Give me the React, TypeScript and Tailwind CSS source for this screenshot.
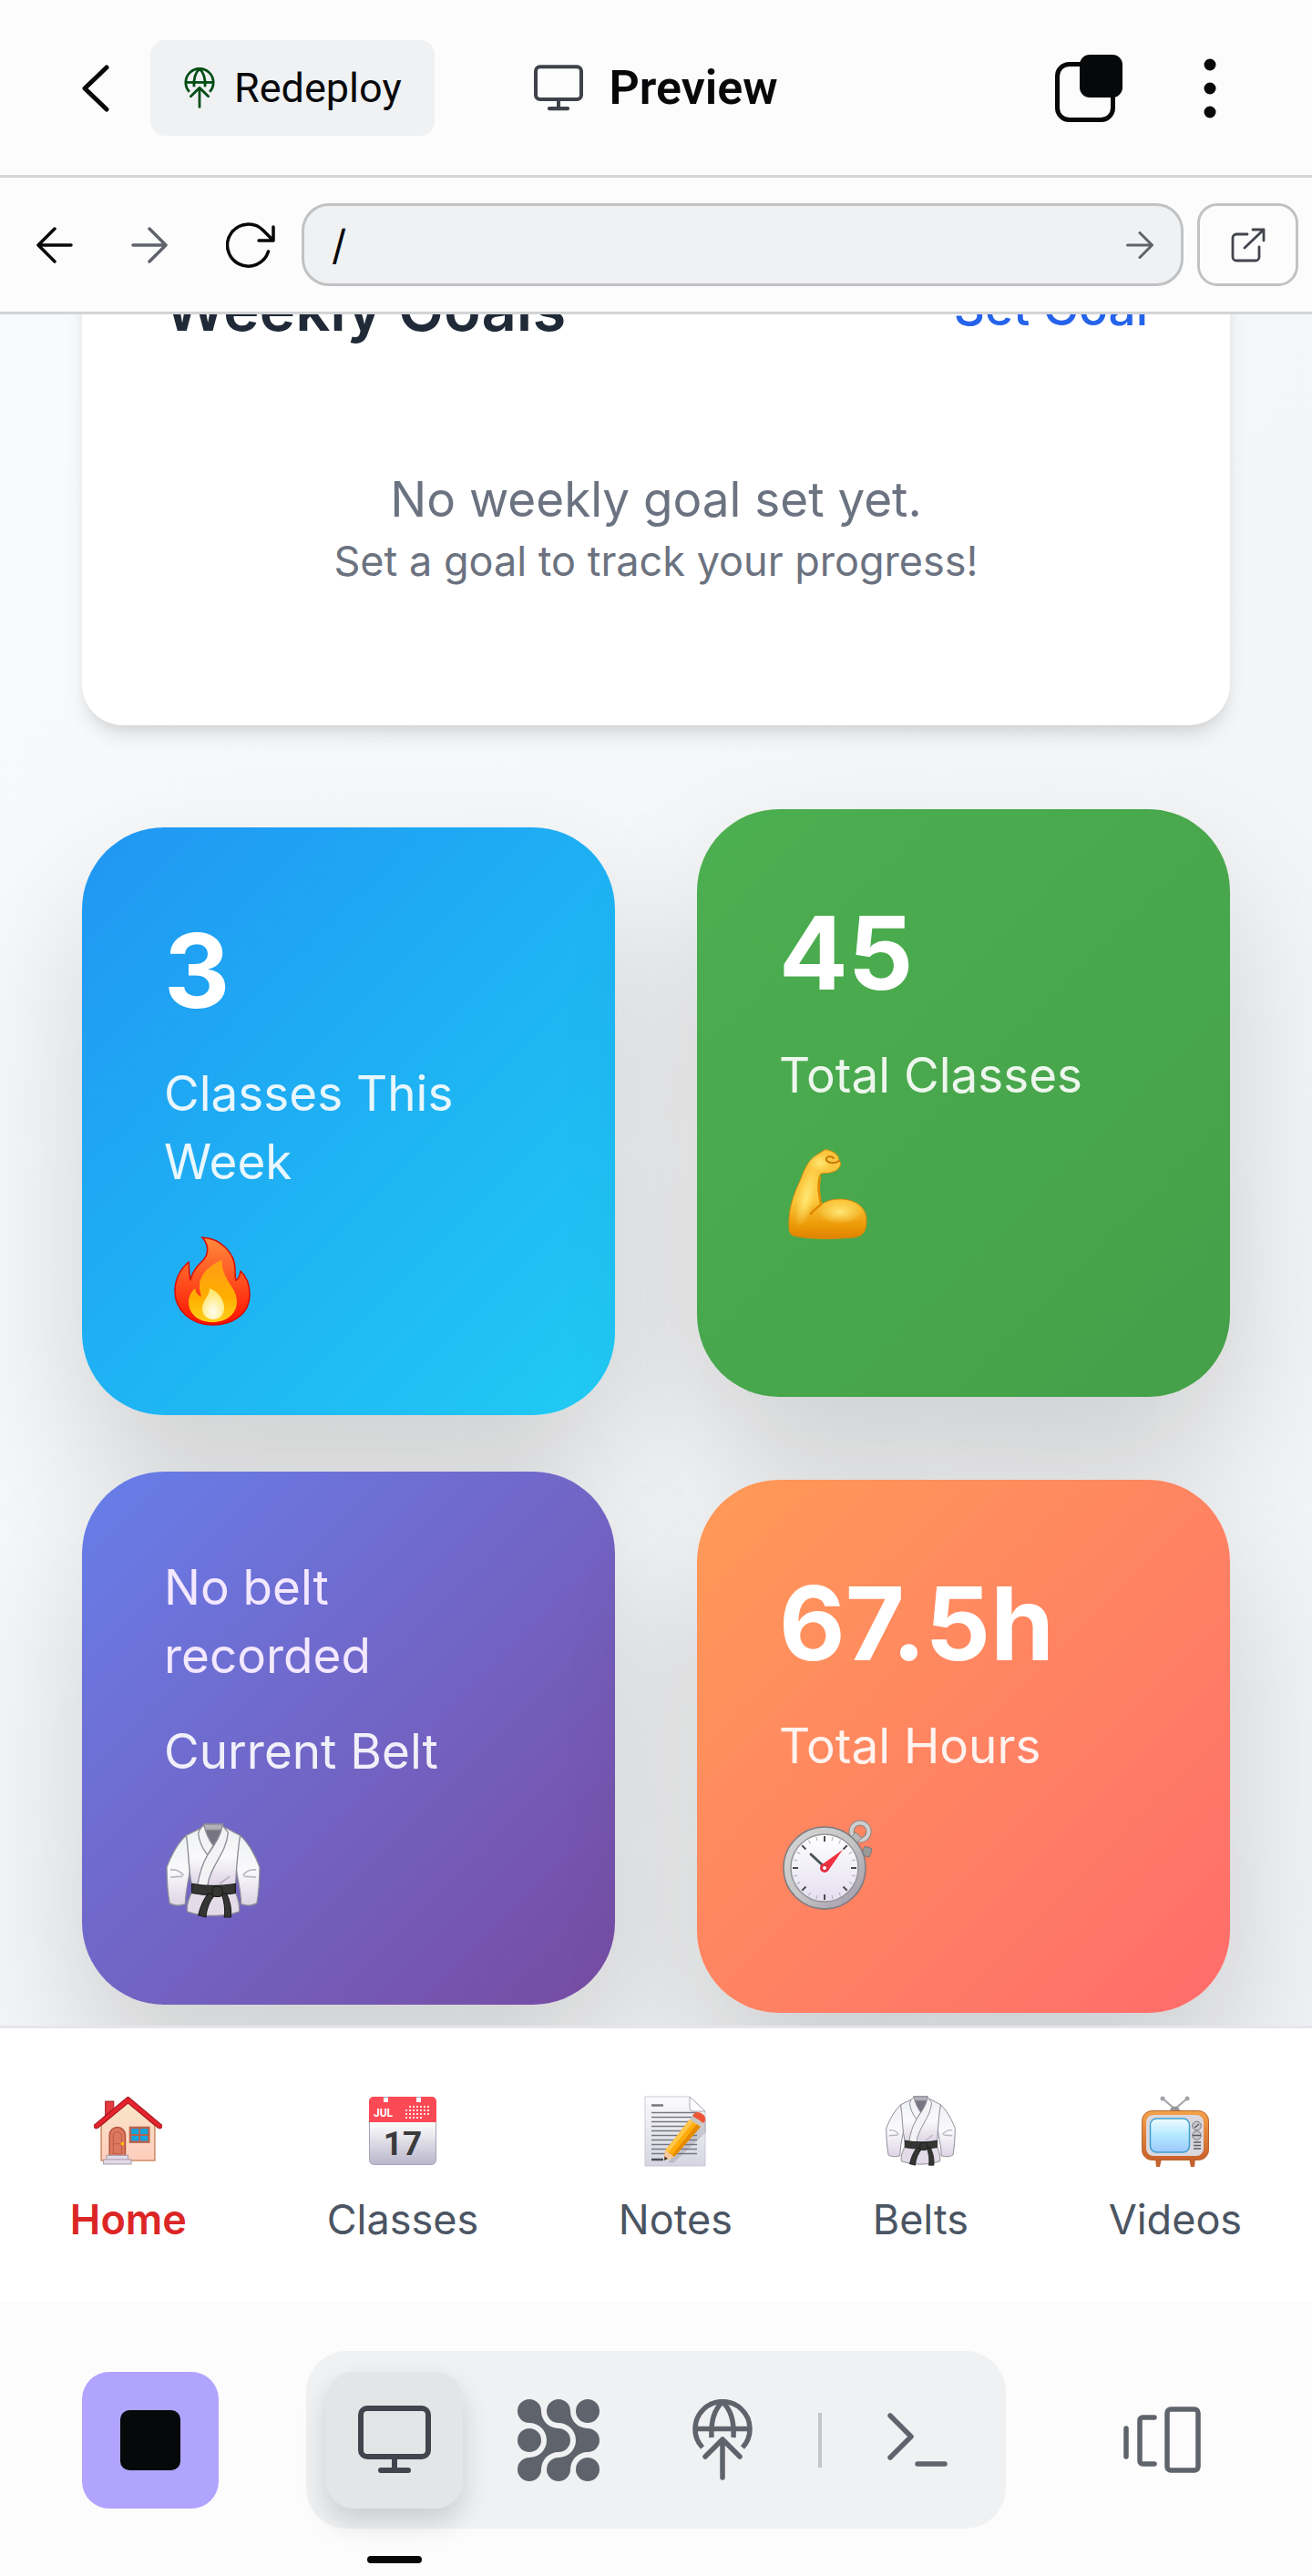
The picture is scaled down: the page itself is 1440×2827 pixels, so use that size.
import React from "react";

type IconProps = { className?: string };

/* ---------- Line icons ---------- */

function MonitorIcon({ className }: IconProps) {
  return (
    <svg viewBox="0 0 80 75" fill="none" stroke="currentColor" strokeWidth="6" strokeLinecap="round" className={className} aria-hidden="true">
      <rect x="3" y="3" width="74" height="53" rx="7" />
      <path d="M40 56v15" />
      <path d="M25 71h30" />
    </svg>
  );
}

function DeployIcon({ className }: IconProps) {
  return (
    <svg viewBox="0 0 66 89" fill="none" stroke="currentColor" strokeWidth="5.5" className={className} aria-hidden="true">
      <path d="M11 53A30 30 0 1 1 55 53" />
      <path d="M3 32.500h60" />
      <path d="M33 3C24 11 20 24 21 42M33 3c9 8 13 21 12 39" />
      <path d="M33 46v40M14 63l19-19 19 19" strokeLinecap="round" strokeLinejoin="round" />
    </svg>
  );
}

function BackIcon({ className }: IconProps) {
  return (
    <svg viewBox="0 0 30 52" fill="none" stroke="currentColor" strokeWidth="5" strokeLinecap="round" strokeLinejoin="round" className={className} aria-hidden="true">
      <path d="M27 3 3 26l24 23" />
    </svg>
  );
}

function ArrowIcon({ className, stroke = 3.5 }: IconProps & { stroke?: number }) {
  return (
    <svg viewBox="0 0 40 40" fill="none" stroke="currentColor" strokeWidth={stroke} strokeLinecap="round" strokeLinejoin="round" className={className} aria-hidden="true">
      <path d="M2 20h36M20 2l18 18-18 18" />
    </svg>
  );
}

function ReloadIcon({ className }: IconProps) {
  return (
    <svg viewBox="0 0 54 50" fill="none" stroke="currentColor" strokeWidth="3.500" strokeLinecap="round" strokeLinejoin="round" className={className} aria-hidden="true">
      <path d="M46.500 32A23 23 0 1 1 41 9l11 11M52 5v15H36" />
    </svg>
  );
}

function ExternalIcon({ className }: IconProps) {
  return (
    <svg viewBox="0 0 38 38" fill="none" stroke="currentColor" strokeWidth="2.800" strokeLinecap="round" strokeLinejoin="round" className={className} aria-hidden="true">
      <path d="M18 7H6a4 4 0 0 0-4 4v21a4 4 0 0 0 4 4h21a4 4 0 0 0 4-4V21" />
      <path d="M24 2h12v12M36 2 15 22" />
    </svg>
  );
}

function OverlapIcon({ className }: IconProps) {
  return (
    <svg viewBox="0 0 74 74" className={className} aria-hidden="true">
      <rect x="2.500" y="10.500" width="61" height="61" rx="13" fill="none" stroke="currentColor" strokeWidth="5" />
      <rect x="27" y="0" width="47" height="47" rx="11" fill="currentColor" />
    </svg>
  );
}

function MoreIcon({ className }: IconProps) {
  return (
    <svg viewBox="0 0 14 66" fill="currentColor" className={className} aria-hidden="true">
      <circle cx="7" cy="7" r="6.500" />
      <circle cx="7" cy="33" r="6.500" />
      <circle cx="7" cy="59" r="6.500" />
    </svg>
  );
}

function AgentIcon({ className }: IconProps) {
  const ribbon =
    "M13 0A13 13 0 0 1 26 13A19 19 0 0 0 45 32A13 13 0 0 1 45 58A19 19 0 0 0 26 77A13 13 0 1 1 13 64A19 19 0 0 0 13 26A13 13 0 1 1 13 0Z";
  return (
    <svg viewBox="0 0 90 90" fill="currentColor" className={className} aria-hidden="true">
      <path d={ribbon} />
      <path d={ribbon} transform="translate(32 0)" />
      <circle cx="13" cy="45" r="13" />
      <circle cx="77" cy="13" r="13" />
      <circle cx="77" cy="77" r="13" />
    </svg>
  );
}

function TerminalIcon({ className }: IconProps) {
  return (
    <svg viewBox="0 0 66 59" fill="none" stroke="currentColor" strokeWidth="5.500" strokeLinecap="round" strokeLinejoin="round" className={className} aria-hidden="true">
      <path d="M3 3l23 23L3 49M33 56h30" />
    </svg>
  );
}

function PanelsIcon({ className }: IconProps) {
  return (
    <svg viewBox="0 0 85 73" fill="none" stroke="currentColor" strokeWidth="5.500" strokeLinecap="round" strokeLinejoin="round" className={className} aria-hidden="true">
      <path d="M3 24v31M34 12H21a3 3 0 0 0-3 3v45a3 3 0 0 0 3 3h13" />
      <rect x="48" y="3" width="34" height="67" rx="4" />
    </svg>
  );
}

/* ---------- Pictograms ---------- */

function FireArt({ className }: IconProps) {
  return (
    <svg viewBox="0 0 84 98" className={className} aria-hidden="true">
      <defs>
        <linearGradient id="fire-a" x1="0" y1="0" x2="0" y2="1">
          <stop offset="0" stopColor="#ff8a3c" />
          <stop offset=".55" stopColor="#ff4a1c" />
          <stop offset="1" stopColor="#fa0f00" />
        </linearGradient>
        <linearGradient id="fire-b" x1="0" y1="0" x2="0" y2="1">
          <stop offset="0" stopColor="#ff9d14" />
          <stop offset=".6" stopColor="#ffae00" />
          <stop offset="1" stopColor="#ffd018" />
        </linearGradient>
        <radialGradient id="fire-c" cx=".5" cy=".75" r=".6">
          <stop offset="0" stopColor="#fffef2" />
          <stop offset="1" stopColor="#ffe875" />
        </radialGradient>
      </defs>
      <path
        d="M31 1C52 2 67 19 67 36c0 5 0 9 1 12 4-2 4-6 5-10 7 6 10 16 10 26 0 20-17 33-41 33S1 80 1 60C1 45 8 35 16 28c1 6 0 12 2 19 3-10 8-15 13-20C38 20 39 10 31 1Z"
        fill="url(#fire-a)"
        stroke="#d90a00"
        strokeWidth="1.500"
      />
      <path d="M53 26C40 30 28 42 28 54c0 5 1 8 2 12-5-2-6-5-7-9-4 3-7 9-7 15 0 13 11 22 26 22s27-9 27-22c0-9-4-14-9-22-5-9-8-15-7-24Z" fill="url(#fire-b)" />
      <path d="M39 57c0 9-8 13-8 22 0 7 5 12 12 12s12-5 12-13c0-9-7-18-16-21Z" fill="url(#fire-c)" />
    </svg>
  );
}

function ArmArt({ className }: IconProps) {
  return (
    <svg viewBox="0 0 87 100" className={className} aria-hidden="true">
      <defs>
        <linearGradient id="arm-a" x1="0" y1="0" x2="0" y2="1">
          <stop offset="0" stopColor="#fbc53d" />
          <stop offset=".55" stopColor="#fcc93f" />
          <stop offset=".85" stopColor="#ec9906" />
          <stop offset="1" stopColor="#df8200" />
        </linearGradient>
        <radialGradient id="arm-b">
          <stop offset="0" stopColor="#ffe874" />
          <stop offset="1" stopColor="#ffe874" stopOpacity="0" />
        </radialGradient>
      </defs>
      <path
        d="M40 1c3-1 11 2 14 6 2 2 1 5 3 7 2 3-2 10-8 11-5 2-9 1-13 2-5 6-3 23 0 34 6-4 12-6 21-6 17 0 29 9 29 23 0 13-4 18-15 19-20 2-45 2-61-1C2 95 1 91 1 85 0 66 6 50 13 35c3-7 5-14 10-21C28 8 34 5 40 1Z"
        fill="url(#arm-a)"
        stroke="#d88a0c"
        strokeWidth="1"
      />
      <ellipse cx="57" cy="69" rx="25" ry="13" fill="url(#arm-b)" />
      <ellipse cx="20" cy="53" rx="10" ry="34" fill="url(#arm-b)" transform="rotate(15 20 53)" />
      <ellipse cx="35" cy="15" rx="13" ry="10" fill="url(#arm-b)" />
      <path d="M36 61c-4 3-8 6-11 10M35 31c-2 8-1 20 1 29" fill="none" stroke="#df8a00" strokeWidth="2.500" strokeLinecap="round" />
      <path d="M56 13c-4 3-12 3-14-1-1-4 5-5 8-2" fill="none" stroke="#c67605" strokeWidth="2" strokeLinecap="round" />
    </svg>
  );
}

function GiArt({ className, id }: IconProps & { id: string }) {
  const cloth = `gi-${id}`;
  return (
    <svg viewBox="0 0 102 102" className={className} aria-hidden="true">
      <defs>
        <linearGradient id={cloth} x1="0" y1="0" x2="0" y2="1">
          <stop offset="0" stopColor="#eef0f2" />
          <stop offset=".5" stopColor="#fafafc" />
          <stop offset="1" stopColor="#ddd4e4" />
        </linearGradient>
      </defs>
      <g stroke="#8d8c98" strokeWidth="1.300" strokeLinejoin="round">
        <path d="M22 13C14 20 6 34 1 47c0 14 1 27 3 39 5 3 11 3 17 1 0-10 2-20 4-30l3-20Z" fill={`url(#${cloth})`} />
        <path d="M80 13c8 7 16 21 21 34 0 14-1 27-3 39-5 3-11 3-17 1 0-10-2-20-4-30l-3-20Z" fill={`url(#${cloth})`} />
        <path d="M28 74c-4 8-6 14-5 21 17 6 39 6 56 0 1-7-1-13-4-21Z" fill="#e3dbe8" />
        <path d="M38 5 22 13c3 19 2 36 6 54h47c1-18 2-36 5-54L65 5Z" fill={`url(#${cloth})`} />
        <path d="M41 1h20l2 6-12 18L39 7Z" fill="#777581" />
        <path d="M41 1h20l1 6H41Z" fill="#b4b2b9" />
        <path d="M41 2c-3 2-5 5-6 9 1 9 5 17 10 23l6-10C46 17 43 10 41 2Z" fill="#f3f3f5" />
        <path d="M61 2c-2 12-8 20-16 32-6 10-9 21-11 33h11c2-20 20-34 22-57Z" fill="#f3f3f5" />
      </g>
      <path d="M5 50c7-1 11 2 14 6M5 58l13-1M97 50c-7-1-11 2-14 6M97 58l-13-1M58 65l11-8" fill="none" stroke="#b9b7c2" strokeWidth="1.800" />
      <g fill="#353634" stroke="#181918" strokeWidth="1">
        <path d="M28 65c16 3 31 3 47 0v10c-16 3-31 3-47 0Z" />
        <path d="M46 75c-6 7-9 15-11 24l8 2c1-9 4-17 9-23Z" />
        <path d="M60 76c3 8 4 17 3 25h7c1-9-1-18-5-26Z" />
        <rect x="50" y="68" width="11" height="11" rx="4" />
      </g>
    </svg>
  );
}

function StopwatchArt({ className }: IconProps) {
  const ticks = Array.from({ length: 24 }, (_, i) => i * 15);
  return (
    <svg viewBox="0 0 98 100" className={className} aria-hidden="true">
      <defs>
        <linearGradient id="watch-rim" x1="0" y1="0" x2="1" y2="1">
          <stop offset="0" stopColor="#d6d6d6" />
          <stop offset=".5" stopColor="#c6c6c6" />
          <stop offset="1" stopColor="#9c96a8" />
        </linearGradient>
        <linearGradient id="watch-face" x1="0" y1="0" x2="0" y2="1">
          <stop offset="0" stopColor="#ffffff" />
          <stop offset="1" stopColor="#e4dff0" />
        </linearGradient>
      </defs>
      <circle cx="85" cy="13" r="9.500" fill="none" stroke="#858585" strokeWidth="6" />
      <circle cx="85" cy="13" r="9.500" fill="none" stroke="#cfcfcf" strokeWidth="4" />
      <path d="M74 20l6-6 7 6-7 7Z" fill="#b8b8b8" stroke="#858585" />
      <rect x="88" y="30" width="9" height="10" rx="2" fill="#999" stroke="#777" transform="rotate(20 92 35)" />
      <circle cx="46" cy="53" r="45" fill="url(#watch-rim)" stroke="#7d7b80" strokeWidth="1.500" />
      <circle cx="46" cy="53" r="37" fill="url(#watch-face)" stroke="#96949a" strokeWidth="1.500" />
      {ticks.map((a) => (
        <path
          key={a}
          d={a % 45 === 0 ? "M46 18v6" : "M46 18v4"}
          stroke={a % 45 === 0 ? "#4b4b4b" : "#b0b0b0"}
          strokeWidth={a % 45 === 0 ? 2 : 1}
          transform={`rotate(${a} 46 53)`}
        />
      ))}
      <path d="M45 51 31 38" stroke="#4a5457" strokeWidth="3" strokeLinecap="round" />
      <path d="M42 50 66 33 50 56Z" fill="#f0303f" />
      <circle cx="46" cy="53" r="3.500" fill="#fff" stroke="#e52e40" strokeWidth="3" />
    </svg>
  );
}

function HomeArt({ className }: IconProps) {
  return (
    <svg viewBox="0 0 74 74" className={className} aria-hidden="true">
      <defs>
        <linearGradient id="home-wall" x1="0" y1="0" x2="0" y2="1">
          <stop offset="0" stopColor="#f8e6c8" />
          <stop offset="1" stopColor="#ffcdbd" />
        </linearGradient>
      </defs>
      <rect x="12.500" y="5" width="9" height="18" fill="#e23b40" stroke="#a81c22" />
      <path d="M37 5 66 31v38H8V31Z" fill="url(#home-wall)" stroke="#d08a62" strokeWidth="1.500" />
      <path d="M37 0 74 31c0 3-2 4-4 3L37 7 4 34c-2 1-4 0-4-3Z" fill="#e5232e" stroke="#a3141c" strokeWidth="1" />
      <path d="M17 65V42a8.500 9 0 0 1 17 0v23Z" fill="#dd7860" stroke="#b4523c" strokeWidth="1.500" />
      <path d="M21 62V43a4.500 5 0 0 1 9 0v19ZM21 51h9" fill="none" stroke="#bd5c46" />
      <circle cx="31" cy="51" r="1.800" fill="#ffc400" />
      <rect x="39.500" y="33.500" width="20" height="15.500" fill="#12a5e2" stroke="#b5634f" strokeWidth="2.500" />
      <path d="M49.500 34v15M40 41.500h20" stroke="#b5634f" strokeWidth="2" />
      <rect x="14" y="63.500" width="23" height="5" fill="#e2dbe7" stroke="#a79cae" />
      <rect x="10.500" y="68" width="30" height="5" fill="#e2dbe7" stroke="#a79cae" />
    </svg>
  );
}

function CalendarArt({ className }: IconProps) {
  return (
    <svg viewBox="0 0 74 75" className={className} aria-hidden="true">
      <defs>
        <linearGradient id="cal-page" x1="0" y1="0" x2="0" y2="1">
          <stop offset=".4" stopColor="#fbfbfb" />
          <stop offset="1" stopColor="#b8b6cb" />
        </linearGradient>
      </defs>
      <rect x=".5" y=".5" width="73" height="74" rx="5" fill="url(#cal-page)" stroke="#a5a3b8" />
      <path d="M0 28V5a5 5 0 0 1 5-5h11v6h5V0h31v6h5V0h12a5 5 0 0 1 5 5v23Z" fill="#fb4a55" />
      <text x="5" y="22" fontFamily="Roboto, sans-serif" fontSize="12" fontWeight="700" fill="#fff">JUL</text>
      {[0, 1, 2, 3].map((r) =>
        [0, 1, 2, 3, 4, 5, 6].map((c) =>
          (r === 0 && c < 1) || (r === 3 && c > 4) ? null : (
            <rect key={`${r}-${c}`} x={40 + c * 4} y={10 + r * 4} width="2" height="2" fill="#ffe3e5" />
          ),
        ),
      )}
      <text x="37" y="64" textAnchor="middle" fontFamily="Roboto, sans-serif" fontSize="37" fontWeight="700" fill="#3b3b3d">17</text>
    </svg>
  );
}

function NotesArt({ className }: IconProps) {
  const rules = [18, 23, 28, 33, 38, 43, 48, 53, 58, 63];
  return (
    <svg viewBox="0 0 68 78" className={className} aria-hidden="true">
      <defs>
        <linearGradient id="note-page" x1="0" y1="0" x2="0" y2="1">
          <stop offset="0" stopColor="#fbfbfc" />
          <stop offset="1" stopColor="#d5d5e2" />
        </linearGradient>
      </defs>
      <path d="M1 1h49l17 16v60H1Z" fill="url(#note-page)" stroke="#c9c9d4" />
      <path d="M50 1v13q0 3 4 3h13Z" fill="#fff" stroke="#a9a9b3" />
      <path d="M8 10.500h13" stroke="#77777d" strokeWidth="2.500" />
      {rules.map((y) => (
        <path key={y} d={`M8 ${y}.5h50`} stroke="#77777f" strokeWidth="1.300" />
      ))}
      <path d="M8 70h13" stroke="#4c4c52" strokeWidth="2.500" />
      <path d="M26 73 62 33 68 24V40L32 74Z" fill="#6b6b78" opacity=".25" />
      <path d="M22 71 23 60 50 26 62 34 33 67Z" fill="#ffab0a" />
      <path d="M23 60 50 26 54 29 26 63Z" fill="#ffc64a" />
      <path d="M30 66 58 31 62 34 33 67Z" fill="#e58a00" />
      <path d="M22 71 23 60 33 67Z" fill="#f6c9a0" />
      <path d="M22 71 22.500 66.500 26 69Z" fill="#3a302a" />
      <path d="M50 26 53 22 65 30 62 34Z" fill="#c9c6c2" />
      <path d="M53 22C56 17 60 17 64 20S68 27 65 30Z" fill="#ee5637" />
    </svg>
  );
}

function TvArt({ className }: IconProps) {
  return (
    <svg viewBox="0 0 74 78" className={className} aria-hidden="true">
      <defs>
        <linearGradient id="tv-case" x1="0" y1="0" x2="0" y2="1">
          <stop offset="0" stopColor="#f5a34a" />
          <stop offset="1" stopColor="#c9602c" />
        </linearGradient>
        <linearGradient id="tv-screen" x1="0" y1="0" x2="0" y2="1">
          <stop offset="0" stopColor="#eefcff" />
          <stop offset=".5" stopColor="#b4e8ff" />
          <stop offset="1" stopColor="#9cc8fb" />
        </linearGradient>
      </defs>
      <path d="M36 14 23 3M37 14 50 3" stroke="#a2a0a6" strokeWidth="2" />
      <circle cx="23" cy="3" r="2.500" fill="#a4a3a8" />
      <circle cx="50" cy="3" r="2.500" fill="#a4a3a8" />
      <path d="M31 17c0-7 11-7 11 0Z" fill="#97959b" />
      <path d="M15 69h7l-2 9h-4ZM52 69h7l-1 9h-4Z" fill="#c4622e" />
      <rect x=".5" y="16.500" width="73" height="54" rx="11" fill="url(#tv-case)" stroke="#b8642b" />
      <rect x="5" y="21" width="63" height="45" rx="8" fill="#dad8de" />
      <rect x="9.500" y="25" width="43" height="37" rx="7" fill="url(#tv-screen)" stroke="#3fa0cf" strokeWidth="1.500" />
      <circle cx="60.500" cy="33" r="4.800" fill="#c8c7cc" stroke="#77767c" />
      <circle cx="60.500" cy="43.500" r="4.800" fill="#c8c7cc" stroke="#77767c" />
      <path d="M58 35l5-4M56 43.500h9M57 51h8M57 54.500h8M57 58h8" stroke="#5b5960" strokeWidth="1.500" />
    </svg>
  );
}

/* ---------- Page sections ---------- */

function TitleBar() {
  return (
    <header className="grid grid-cols-[1fr_auto_1fr] items-center border-b-3 border-[#d2d4d6] px-[90px] pt-11 pb-[43px]">
      <div className="flex items-center gap-[45px]">
        <button type="button" aria-label="Back" className="text-[#07080a]">
          <BackIcon className="h-[52px] w-[30px]" />
        </button>
        <button type="button" className="flex h-[105px] items-center gap-5 rounded-2xl bg-[#eff1f3] px-9 font-['Roboto',sans-serif] text-[45px] text-[#07080a]">
          <DeployIcon className="h-[45px] w-[36px] text-[#004d14]" />
          <span>Redeploy</span>
        </button>
      </div>
      <h1 className="flex items-center gap-7 font-['Roboto',sans-serif] text-[52px] font-semibold text-[#07080a]">
        <MonitorIcon className="h-[51px] w-[54px] text-[#3f424a]" />
        Preview
      </h1>
      <div className="flex items-center justify-end gap-[74px] text-[#07080a]">
        <button type="button" aria-label="Tabs">
          <OverlapIcon className="size-[74px]" />
        </button>
        <button type="button" aria-label="More" className="flex w-11 justify-center">
          <MoreIcon className="h-[66px] w-[14px]" />
        </button>
      </div>
    </header>
  );
}

function AddressBar() {
  return (
    <nav aria-label="Address" className="flex items-center gap-[15px] border-b-3 border-[#d2d4d6] py-7 pr-[15px] pl-[40px]">
      <div className="flex items-center gap-[64px] pr-[14px]">
        <button type="button" aria-label="Go back" className="text-[#07080a]">
          <ArrowIcon className="size-10 rotate-180" />
        </button>
        <button type="button" aria-label="Go forward" className="text-[#5f636b]">
          <ArrowIcon className="size-10" />
        </button>
        <button type="button" aria-label="Reload" className="text-[#07080a]">
          <ReloadIcon className="h-[50px] w-[54px]" />
        </button>
      </div>
      <div className="flex h-[91px] min-w-0 flex-1 items-center rounded-[30px] border-3 border-[#c0c2c4] bg-[#eff1f3] pr-[30px] pl-[30px]">
        <input aria-label="Path" defaultValue="/" className="min-w-0 flex-1 bg-transparent text-[45px] text-[#07080a] outline-none" />
        <button type="button" aria-label="Go" className="text-[#5f636b]">
          <ArrowIcon className="size-[30px]" stroke={4} />
        </button>
      </div>
      <a href="/" aria-label="Open in new tab" className="flex h-[91px] w-[111px] items-center justify-center rounded-[22px] border-3 border-[#c0c2c4] text-[#42454d]">
        <ExternalIcon className="size-[38px]" />
      </a>
    </nav>
  );
}

type StatProps = {
  value?: string;
  note?: string;
  label: string;
  tone: string;
  art: React.ReactNode;
};

function StatCard({ value, note, label, tone, art }: StatProps) {
  return (
    <article className={`flex flex-col gap-[30px] rounded-[90px] p-[90px] shadow-[0_75px_150px_rgba(0,0,0,0.16)] ${tone}`}>
      {value && <p className="text-[112px] leading-[135px] font-bold text-white">{value}</p>}
      {note && <p className="text-[53px] leading-[75px] text-[#f3e8ff]">{note}</p>}
      <p className="text-[53px] leading-[75px] text-white/90">{label}</p>
      <div className="flex h-[120px] items-center pt-[6px]">{art}</div>
    </article>
  );
}

function Dashboard() {
  return (
    <main className="overflow-hidden bg-linear-to-br from-[#f9fafb] to-[#f1f2f4] px-[90px] pb-[14px]">
      <section className="mt-[-149px] rounded-[45px] bg-white p-[90px] shadow-[0_15px_22px_-4px_rgba(0,0,0,0.1),0_8px_15px_-8px_rgba(0,0,0,0.1)]">
        <div className="mb-[60px] flex items-center justify-between">
          <h2 className="text-[67px] leading-[105px] font-semibold text-[#1f2937]">Weekly Goals</h2>
          <button type="button" className="text-[53px] font-medium text-[#2563eb]">Set Goal</button>
        </div>
        <div className="py-[60px] text-center text-[#6b7280]">
          <p className="text-[53px] leading-[75px]">No weekly goal set yet.</p>
          <p className="text-[45px] leading-[60px]">Set a goal to track your progress!</p>
        </div>
      </section>
      <section aria-label="Statistics" className="mt-[92px] grid grid-cols-2 gap-[90px]">
        <div className="flex flex-col gap-[62px] pt-5">
          <StatCard
            value="3"
            label="Classes This Week"
            tone="min-h-[645px] bg-linear-135 from-[#2196f3] to-[#21cbf3]"
            art={<FireArt className="ml-[11px] h-[98px] w-[84px]" />}
          />
          <StatCard
            note="No belt recorded"
            label="Current Belt"
            tone="min-h-[585px] bg-linear-135 from-[#667eea] to-[#764ba2]"
            art={<GiArt id="card" className="ml-0.5 size-[104px]" />}
          />
        </div>
        <div className="flex flex-col gap-[91px]">
          <StatCard
            value="45"
            label="Total Classes"
            tone="min-h-[645px] bg-linear-135 from-[#4caf50] to-[#45a049]"
            art={<ArmArt className="ml-[10px] h-[100px] w-[87px]" />}
          />
          <StatCard
            value="67.5h"
            label="Total Hours"
            tone="min-h-[585px] bg-linear-135 from-[#ff9a56] to-[#ff6b6b]"
            art={<StopwatchArt className="ml-1 h-[100px] w-[98px]" />}
          />
        </div>
      </section>
    </main>
  );
}

const tabs = [
  { name: "Home", art: <HomeArt className="h-[75px]" />, active: true },
  { name: "Classes", art: <CalendarArt className="h-[75px]" />, active: false },
  { name: "Notes", art: <NotesArt className="h-[78px]" />, active: false },
  { name: "Belts", art: <GiArt id="tab" className="h-[77px]" />, active: false },
  { name: "Videos", art: <TvArt className="h-[78px]" />, active: false },
];

function TabBar() {
  return (
    <nav aria-label="Sections" className="relative flex justify-around border-t-3 border-[#e5e7eb] bg-white pt-[60px] pb-[60px]">
      {tabs.map((tab) => (
        <a key={tab.name} href={`#${tab.name.toLowerCase()}`} className="flex flex-col items-center">
          <span className="flex h-[105px] items-center">{tab.art}</span>
          <span className={`pt-[15px] text-[45px] leading-[60px] ${tab.active ? "font-semibold text-[#dc2626]" : "text-[#4b5563]"}`}>{tab.name}</span>
        </a>
      ))}
    </nav>
  );
}

function Dock() {
  return (
    <footer className="flex items-center justify-between px-[90px] pt-[54px] pb-[51px]">
      <button type="button" aria-label="Stop" className="flex size-[150px] items-center justify-center rounded-[30px] bg-[#b1a4ff]">
        <span className="size-[66px] rounded-[10px] bg-[#07080a]" />
      </button>
      <div className="flex h-[195px] items-center rounded-[45px] bg-[#eff1f3] pr-[22px] pl-[22px] text-[#5f636b]">
        <button
          type="button"
          aria-label="Preview"
          className="relative flex size-[150px] items-center justify-center rounded-[30px] bg-[#e4e5e7] text-[#42454d] shadow-[0_15px_30px_rgba(0,0,0,0.15)]"
        >
          <MonitorIcon className="h-[75px] w-20" />
          <span className="absolute top-[202px] left-[45px] h-2 w-[60px] rounded-sm bg-[#07080a]" />
        </button>
        <button type="button" aria-label="Agent" className="ml-[30px] flex size-[150px] items-center justify-center">
          <AgentIcon className="size-[90px]" />
        </button>
        <button type="button" aria-label="Deploy" className="ml-[30px] flex size-[150px] items-center justify-center">
          <DeployIcon className="h-[89px] w-[66px]" />
        </button>
        <span className="ml-[30px] h-[60px] w-1 bg-[#c3c4c7]" />
        <button type="button" aria-label="Terminal" className="ml-[30px] flex size-[150px] items-center justify-center">
          <TerminalIcon className="h-[59px] w-[66px]" />
        </button>
      </div>
      <button type="button" aria-label="Panels" className="flex size-[150px] items-center justify-center text-[#5f636b]">
        <PanelsIcon className="h-[73px] w-[85px]" />
      </button>
    </footer>
  );
}

export default function App() {
  return (
    <div className="min-h-screen bg-[#fcfcfc] font-['Inter',sans-serif]">
      <TitleBar />
      <AddressBar />
      <Dashboard />
      <TabBar />
      <Dock />
    </div>
  );
}
